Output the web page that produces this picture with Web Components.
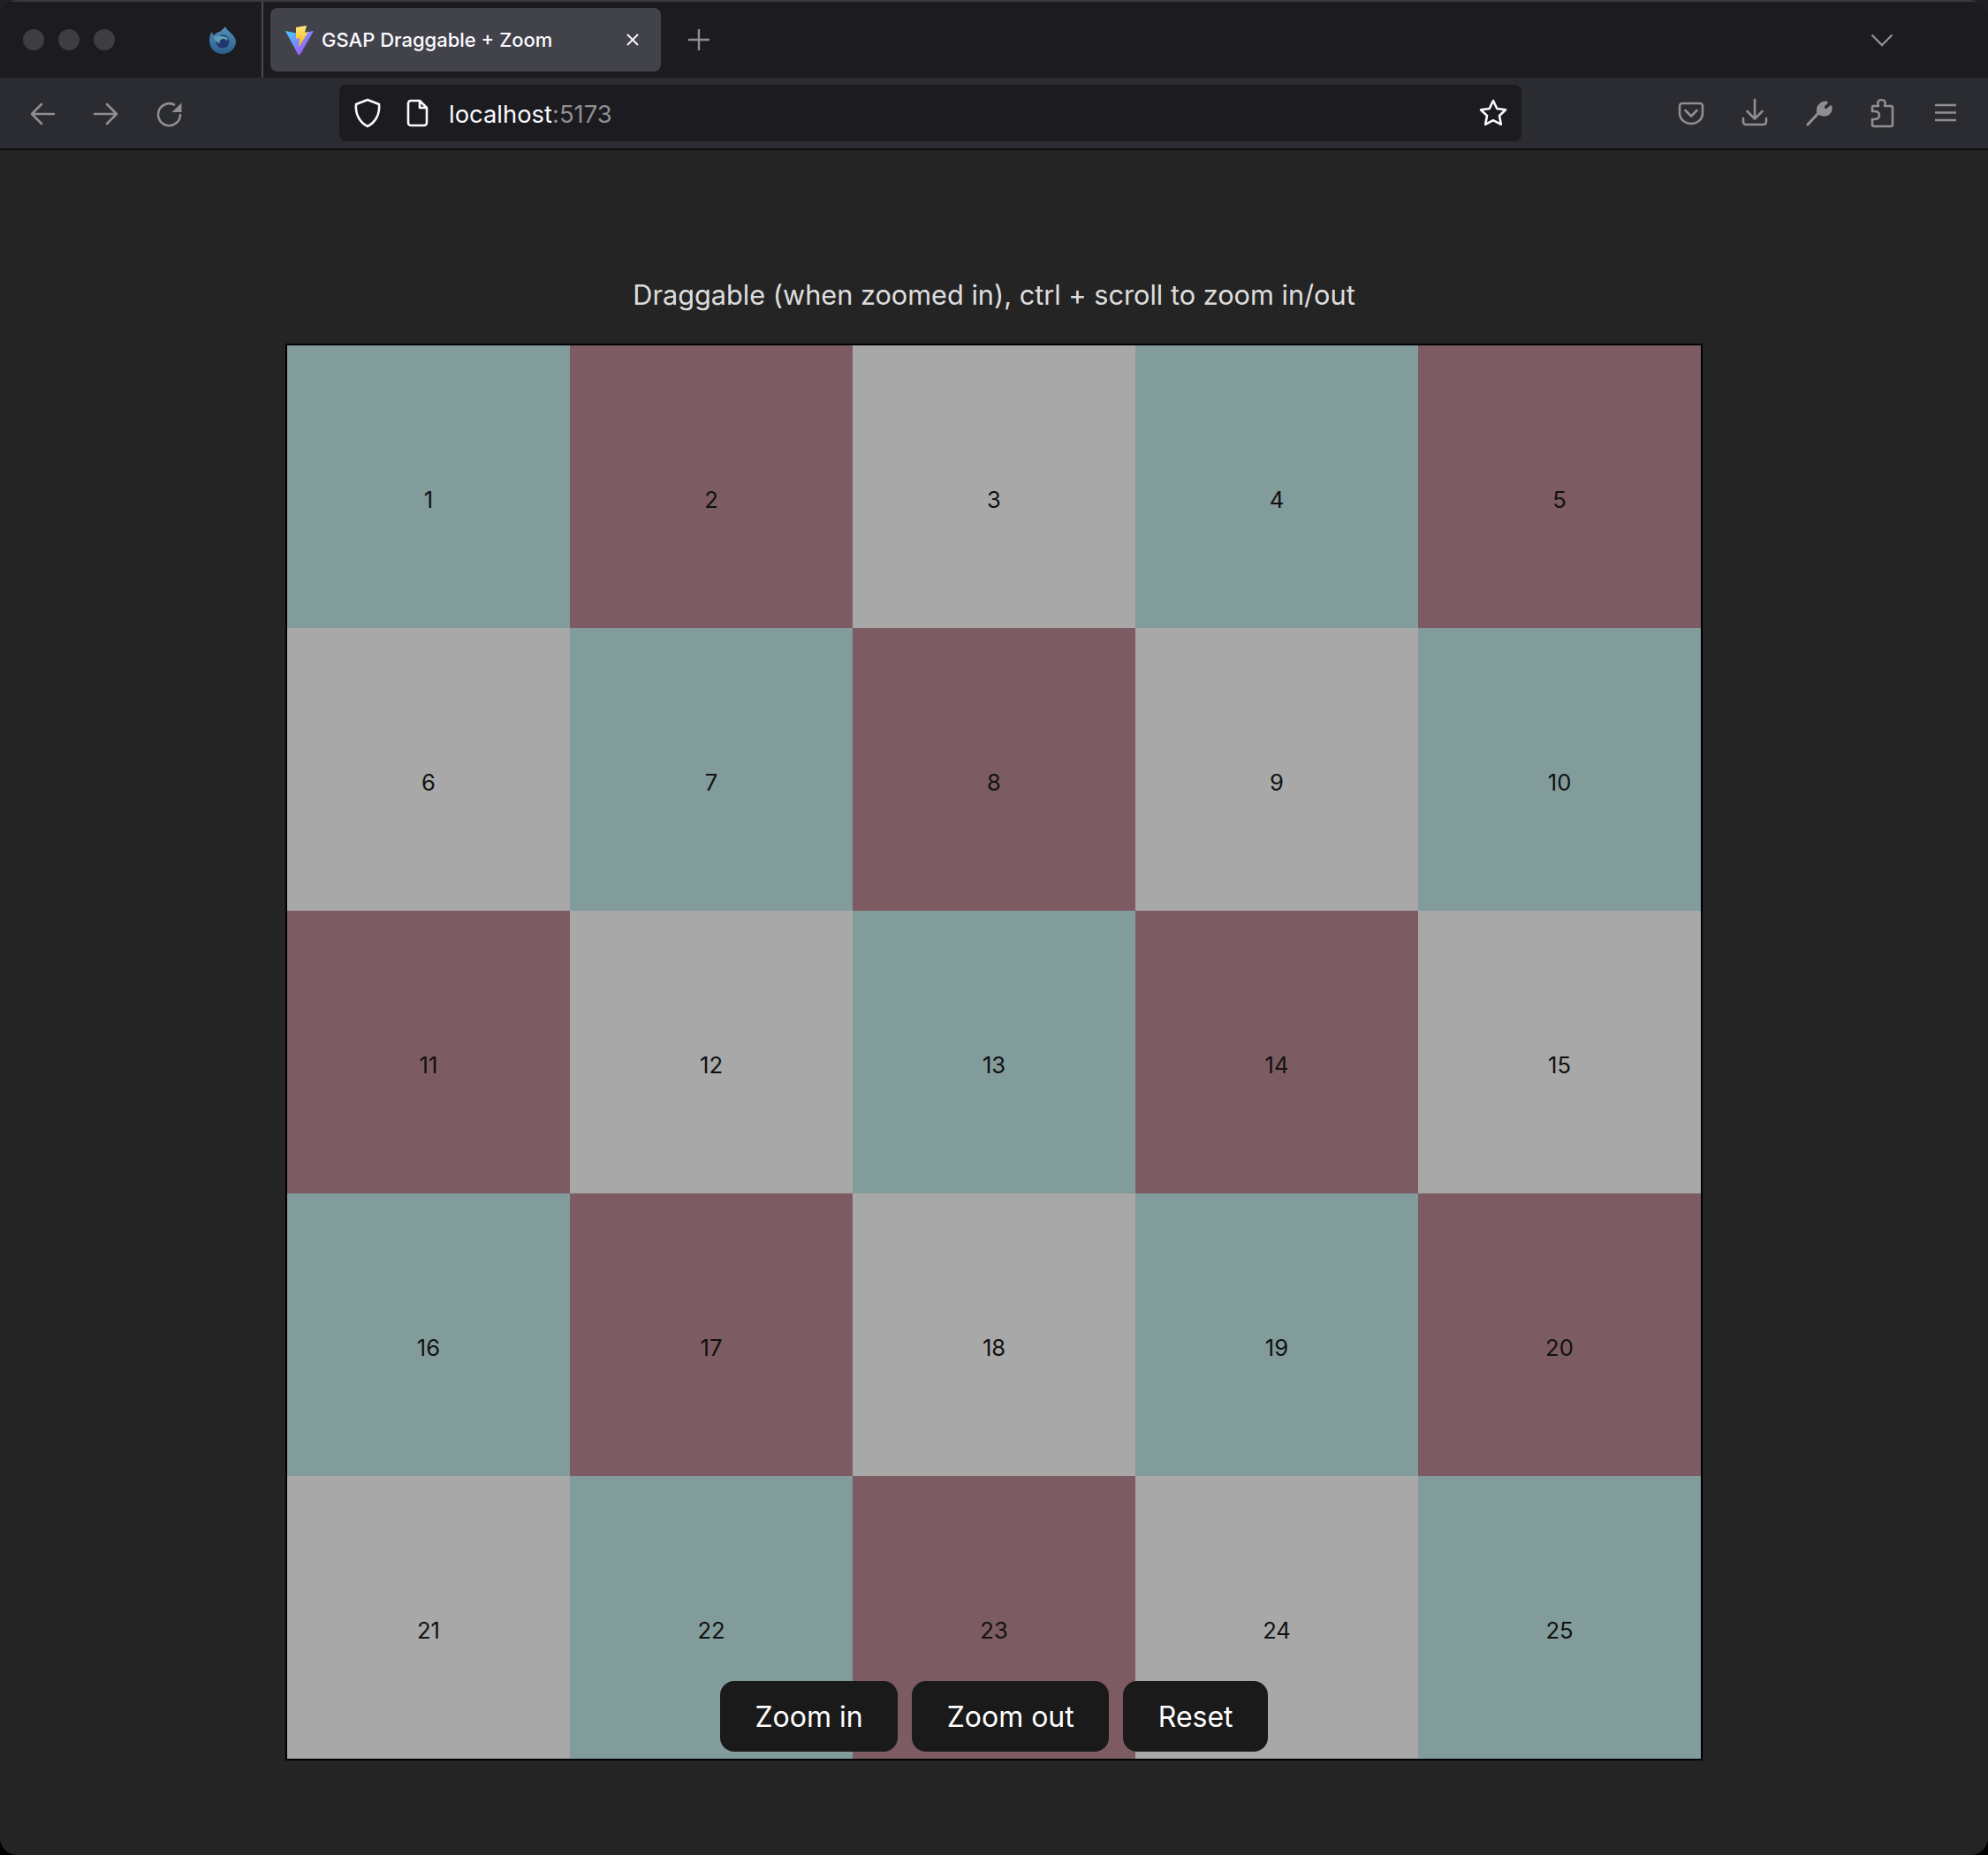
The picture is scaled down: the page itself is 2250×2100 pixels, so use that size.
<!DOCTYPE html>
<html lang="en">
<head>
<meta charset="utf-8">
<title>GSAP Draggable + Zoom</title>
<style>
	html {
		background: linear-gradient(#202022 0 50%, #000 50%);
	}

	body {
		margin: 0;
		font-family: Inter, "Liberation Sans", sans-serif;
	}
</style>
</head>
<body>
<browser-window>
	<browser-tabs slot="tabs" tab-title="GSAP Draggable + Zoom"></browser-tabs>
	<browser-nav slot="nav" host-name="localhost" port=":5173"></browser-nav>
	<app-page heading="Draggable (when zoomed in), ctrl + scroll to zoom in/out">
		<zoom-grid cells="25">
			<zoom-button>Zoom in</zoom-button>
			<zoom-button>Zoom out</zoom-button>
			<zoom-button>Reset</zoom-button>
		</zoom-grid>
	</app-page>
</browser-window>

<script>
class BrowserWindow extends HTMLElement {
	constructor() {
		super();
		this.attachShadow({ mode: "open" });
		this.shadowRoot.innerHTML = `
			<style>
				:host {
					display: flex;
					flex-direction: column;
					height: 2100px;
					border-radius: 20px;
					overflow: hidden;
					background: #242424;
				}

				header {
					flex: none;
				}
			</style>
			<header>
				<slot name="tabs"></slot>
				<slot name="nav"></slot>
			</header>
			<slot></slot>
		`;
	}
}

class BrowserTabs extends HTMLElement {
	constructor() {
		super();
		this.attachShadow({ mode: "open" });
	}

	connectedCallback() {
		this.shadowRoot.innerHTML = `
			<style>
				:host {
					display: flex;
					align-items: center;
					box-sizing: border-box;
					height: 88px;
					border-top: 2px solid #3b3b3e;
					background: #1b1b20;
				}

				.dots {
					display: flex;
					gap: 16px;
					margin-left: 26px;
				}

				.dots span {
					width: 24px;
					height: 24px;
					border-radius: 50%;
					background: #3e3e41;
				}

				.firefox {
					width: 32px;
					height: 32px;
					margin: 0 0 0 106px;
				}

				.separator {
					align-self: stretch;
					width: 2px;
					margin-left: 28px;
					background: #4b4b4e;
				}

				.tab {
					display: flex;
					align-items: center;
					box-sizing: border-box;
					width: 442px;
					height: 72px;
					margin-left: 8px;
					padding: 0 25px 0 16px;
					border-radius: 8px;
					background: #42424a;
					color: #fbfbfe;
					font-size: 22px;
					font-weight: 500;
				}

				.favicon {
					width: 34px;
					height: 34px;
					margin-right: 8px;
				}

				.label {
					flex: 1;
				}

				.close {
					width: 14px;
					height: 14px;
				}

				.plus {
					width: 26px;
					height: 26px;
					margin-left: 30px;
				}

				.chevron {
					width: 26px;
					height: 15px;
					margin-left: auto;
					margin-right: 107px;
				}
			</style>
			<div class="dots"><span></span><span></span><span></span></div>
			<svg class="firefox" viewBox="0 0 32 32">
				<defs>
					<linearGradient id="fx" x1="0" y1="0" x2="0" y2="1">
						<stop offset="0" stop-color="#4f8fb8"/>
						<stop offset="1" stop-color="#2b5f8c"/>
					</linearGradient>
				</defs>
				<path fill="url(#fx)" d="M19 1c1 3 4 5 6 7 4 4 6 7 6 10 0 8-7 14-15 14S1 26 1 17c0-4 1-8 3-10 0 2 1 3 2 4 2-3 5-4 7-4 1-2 4-3 6-6z"/>
				<circle cx="16" cy="18" r="7.5" fill="#23356f"/>
				<path fill="#5f9cb4" d="M6 13c4-2 9-2 14 0 2 1 2 3 1 4-2-2-5-3-7-1-2 1-2 3 0 4-4 0-7-3-8-7z"/>
			</svg>
			<div class="separator"></div>
			<div class="tab">
				<svg class="favicon" viewBox="0 0 34 34">
					<defs>
						<linearGradient id="viteBody" x1="0" y1="0" x2="1" y2="1">
							<stop offset="0" stop-color="#41d1ff"/>
							<stop offset="1" stop-color="#bd34fe"/>
						</linearGradient>
						<linearGradient id="viteBolt" x1="0" y1="0" x2="0" y2="1">
							<stop offset="0" stop-color="#ffea83"/>
							<stop offset="1" stop-color="#ffa800"/>
						</linearGradient>
					</defs>
					<path fill="url(#viteBody)" d="M1 7l15 3 17-3-15.500 27a1 1 0 0 1-2 0z"/>
					<path fill="url(#viteBolt)" d="M13 3l12-2-2 8 4-1-11 18 1-11-4 1z"/>
				</svg>
				<span class="label">${this.getAttribute("tab-title")}</span>
				<svg class="close" viewBox="0 0 14 14"><path d="M1 1l12 12M13 1L1 13" stroke="#fbfbfe" stroke-width="1.800" fill="none"/></svg>
			</div>
			<svg class="plus" viewBox="0 0 26 26"><path d="M13 1v24M1 13h24" stroke="#8f8f92" stroke-width="2.400" fill="none"/></svg>
			<svg class="chevron" viewBox="0 0 26 15"><path d="M1.500 1.500L13 13 24.500 1.500" stroke="#8f8f92" stroke-width="2.400" fill="none"/></svg>
		`;
	}
}

class BrowserNav extends HTMLElement {
	constructor() {
		super();
		this.attachShadow({ mode: "open" });
	}

	connectedCallback() {
		this.shadowRoot.innerHTML = `
			<style>
				:host {
					display: flex;
					align-items: center;
					box-sizing: border-box;
					height: 82px;
					padding: 0 34px;
					border-bottom: 2px solid #101012;
					background: #2b2c31;
				}

				.group {
					display: flex;
					gap: 44px;
				}

				svg {
					display: block;
					flex: none;
					width: 28px;
					height: 32px;
					overflow: visible;
					fill: none;
					stroke: #8f8f92;
					stroke-width: 2.600;
					stroke-linecap: round;
					stroke-linejoin: round;
				}

				.url {
					display: flex;
					align-items: center;
					box-sizing: border-box;
					width: 1338px;
					height: 64px;
					margin: 0 auto 0 178px;
					padding: 0 16px 0 17px;
					border-radius: 8px;
					background: #1b1b20;
					color: #fbfbfe;
					font-size: 27.4px;
				}

				.url svg {
					stroke: #fbfbfe;
				}

				.shield {
					width: 30px;
				}

				.page {
					width: 24px;
					margin: 0 23px 0 30px;
				}

				.address {
					flex: 1;
					padding-top: 2px;
				}

				.port {
					color: #8f8f92;
				}

				.star {
					width: 32px;
				}
			</style>
			<div class="group">
				<svg viewBox="0 0 28 32"><path d="M27 17H2M13 6L2 17l11 11"/></svg>
				<svg viewBox="0 0 28 32"><path d="M1 17h25M15 6l11 11-11 11"/></svg>
				<svg viewBox="0 0 28 32">
					<path d="M26 18A12.500 12.500 0 1 1 19 6.500"/>
					<path d="M27.500 4.500v10.500h-11z" fill="#8f8f92" stroke="none"/>
				</svg>
			</div>
			<div class="url">
				<svg class="shield" viewBox="0 0 30 32"><path d="M15 1l13 5c1 10-3 20-13 25C5 26 1 16 2 6z"/></svg>
				<svg class="page" viewBox="0 0 24 32"><path d="M4 2h10l8 8v17a3 3 0 0 1-3 3H4a3 3 0 0 1-3-3V5a3 3 0 0 1 3-3zM14 2v8h8"/></svg>
				<span class="address">${this.getAttribute("host-name")}<span class="port">${this.getAttribute("port")}</span></span>
				<svg class="star" viewBox="0 0 32 32"><path d="M16 2l4.300 9 9.700 1.300-7 6.700 1.800 9.800L16 24.200 7.200 28.800 9 19l-7-6.700L11.700 11z"/></svg>
			</div>
			<div class="group">
				<svg viewBox="0 0 28 32"><path d="M4 5h20a3 3 0 0 1 3 3v8c0 7-6 12-13 12S1 23 1 16V8a3 3 0 0 1 3-3zM7.500 13l6.500 6.500 6.500-6.500"/></svg>
				<svg viewBox="0 0 28 32"><path d="M14 1v21M5.500 14l8.500 8.500 8.500-8.500M1 22v4a3 3 0 0 0 3 3h20a3 3 0 0 0 3-3v-4"/></svg>
				<svg viewBox="0 0 28 32" style="stroke-width: 3.200"><path d="M2 29L14.500 15.500"/><path d="M14 16c-2-6 2-12 9-12l-4 4 1 4 4 1 4-4c1 7-6 12-14 7z" fill="#8f8f92"/></svg>
				<svg viewBox="0 0 28 32"><path d="M4 8h6c-2-4 0-7 3.500-7S19 4 17 8h7a2 2 0 0 1 2 2v19a2 2 0 0 1-2 2H5a2 2 0 0 1-2-2v-6h2c4 0 6-2 6-4.500S9 14 5 14H3v-4a2 2 0 0 1 1-2z"/></svg>
				<svg viewBox="0 0 28 32" style="stroke-linecap: butt"><path d="M2 7h24M2 15.500h24M2 24h24"/></svg>
			</div>
		`;
	}
}

class AppPage extends HTMLElement {
	constructor() {
		super();
		this.attachShadow({ mode: "open" });
	}

	connectedCallback() {
		this.shadowRoot.innerHTML = `
			<style>
				:host {
					display: flex;
					flex-direction: column;
					align-items: center;
					flex: 1;
					padding-top: 140px;
					background: #242424;
				}

				h1 {
					margin: 0 0 31px;
					color: rgba(255, 255, 255, 0.87);
					font-size: 30.7px;
					font-weight: 400;
					line-height: 48px;
				}
			</style>
			<h1>${this.getAttribute("heading")}</h1>
			<slot></slot>
		`;
	}
}

class ZoomGrid extends HTMLElement {
	constructor() {
		super();
		this.attachShadow({ mode: "open" });
	}

	connectedCallback() {
		const palette = ["teal", "plum", "grey"];
		const total = Number(this.getAttribute("cells"));
		let cells = "";

		for (let i = 0; i < total; i += 1) {
			cells += `<grid-cell tone="${palette[i % 3]}">${i + 1}</grid-cell>`;
		}

		this.shadowRoot.innerHTML = `
			<style>
				:host {
					display: block;
					position: relative;
					border: 2px solid #000;
				}

				.cells {
					display: grid;
					grid-template-columns: repeat(5, 320px);
					grid-auto-rows: 320px;
				}

				.controls {
					position: absolute;
					left: 0;
					right: 0;
					bottom: 8px;
					display: flex;
					justify-content: center;
					gap: 16px;
				}
			</style>
			<div class="cells">${cells}</div>
			<div class="controls"><slot></slot></div>
		`;
	}
}

class GridCell extends HTMLElement {
	constructor() {
		super();
		this.attachShadow({ mode: "open" });
		this.shadowRoot.innerHTML = `
			<style>
				:host {
					display: flex;
					align-items: center;
					justify-content: center;
					box-sizing: border-box;
					padding-top: 29px;
					color: #111;
					font-size: 25.6px;
				}

				:host([tone="teal"]) {
					background: #829b9b;
				}

				:host([tone="plum"]) {
					background: #7c5b63;
				}

				:host([tone="grey"]) {
					background: #a8a8a8;
				}
			</style>
			<slot></slot>
		`;
	}
}

class ZoomButton extends HTMLElement {
	constructor() {
		super();
		this.attachShadow({ mode: "open" });
		this.shadowRoot.innerHTML = `
			<style>
				:host {
					display: flex;
					align-items: center;
					box-sizing: border-box;
					height: 80px;
					padding: 1px 39.5px 0;
					border-radius: 16px;
					background: #1a1a1a;
					color: #fff;
					font-size: 32px;
					font-weight: 400;
				}
			</style>
			<slot></slot>
		`;
	}
}

customElements.define("browser-window", BrowserWindow);
customElements.define("browser-tabs", BrowserTabs);
customElements.define("browser-nav", BrowserNav);
customElements.define("app-page", AppPage);
customElements.define("zoom-grid", ZoomGrid);
customElements.define("grid-cell", GridCell);
customElements.define("zoom-button", ZoomButton);
</script>
</body>
</html>
